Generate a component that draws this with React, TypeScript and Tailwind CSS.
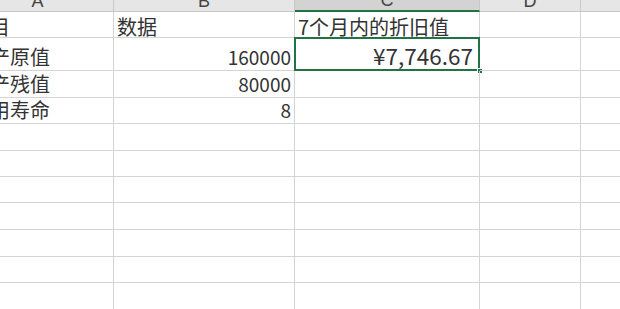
import React from "react";

const colW = ["w-[152px]", "w-[181px]", "w-[185px]", "w-[101px]", "w-[100px]"];
const letters = ["A", "B", "C", "D", "E"];

type Cell = { text?: string; num?: boolean; big?: boolean };

const rows: { h: string; cells: Cell[]; first?: boolean }[] = [
  { h: "h-[26px]", first: true, cells: [{ text: "项目" }, { text: "数据" }, { text: "7个月内的折旧值" }, {}, {}] },
  { h: "h-[33px]", cells: [{ text: "资产原值" }, { text: "160000", num: true }, { text: "¥7,746.67", num: true, big: true }, {}, {}] },
  { h: "h-[27px]", cells: [{ text: "资产残值" }, { text: "80000", num: true }, {}, {}, {}] },
  { h: "h-[26px]", cells: [{ text: "使用寿命" }, { text: "8", num: true }, {}, {}, {}] },
  { h: "h-[27px]", cells: [{}, {}, {}, {}, {}] },
  { h: "h-[26px]", cells: [{}, {}, {}, {}, {}] },
  { h: "h-[26px]", cells: [{}, {}, {}, {}, {}] },
  { h: "h-[27px]", cells: [{}, {}, {}, {}, {}] },
  { h: "h-[27px]", cells: [{}, {}, {}, {}, {}] },
  { h: "h-[26px]", cells: [{}, {}, {}, {}, {}] },
  { h: "h-[27px]", cells: [{}, {}, {}, {}, {}] },
];

function textClass(c: Cell, ci: number, first?: boolean) {
  if (c.big) return "justify-end pr-[6px] text-[22.5px] leading-[28px] pb-[1px]";
  if (c.num) return "justify-end pr-[3px] text-[19px] leading-[24px] pb-[1px]";
  const pad = ci === 0 ? "pl-[8px] " : "pl-[3px] ";
  if (first) return "justify-start " + pad + "text-[20px] leading-[20px]";
  return "justify-start " + pad + "text-[20px] leading-[24px] pb-[1px]";
}

export default function App() {
  return (
    <div className="w-[620px] h-[309px] overflow-hidden bg-white">
      <div className="ml-[-38px] w-[720px] font-['Noto_Sans_CJK_SC','Noto_Sans',sans-serif]">
        {/* column header strip */}
        <div className="flex h-[12px]">
          {letters.map((l, i) => (
            <div
              key={l}
              className={
                colW[i] +
                " flex items-end justify-center overflow-hidden border-r border-[#c8c8c8] text-[18px] leading-[18px] text-[#444] pb-[1px] " +
                (i === 2 ? "bg-[#d3d3d3] border-b-2 border-b-[#217346]" : "bg-[#e6e6e6] border-b border-b-[#c8c8c8]")
              }
            >
              <span className="font-['Liberation_Sans',sans-serif]">{l}</span>
            </div>
          ))}
        </div>
        {rows.map((r, ri) => (
          <div key={ri} className={"flex " + r.h}>
            {r.cells.map((c, ci) => {
              const selected = ri === 1 && ci === 2;
              return (
                <div
                  key={ci}
                  className={
                    colW[ci] +
                    " relative flex items-end overflow-visible border-r border-b border-[#d4d4d4] whitespace-nowrap text-[#333] " +
                    textClass(c, ci, r.first)
                  }
                >
                  {c.text}
                  {selected && (
                    <>
                      <div className="absolute left-[-1px] top-[-1px] right-[-1px] bottom-[-1px] border-2 border-[#217346]" />
                      <div className="absolute right-[-4px] bottom-[-4px] w-[6px] h-[6px] bg-[#217346] border border-white" />
                    </>
                  )}
                </div>
              );
            })}
          </div>
        ))}
      </div>
    </div>
  );
}
